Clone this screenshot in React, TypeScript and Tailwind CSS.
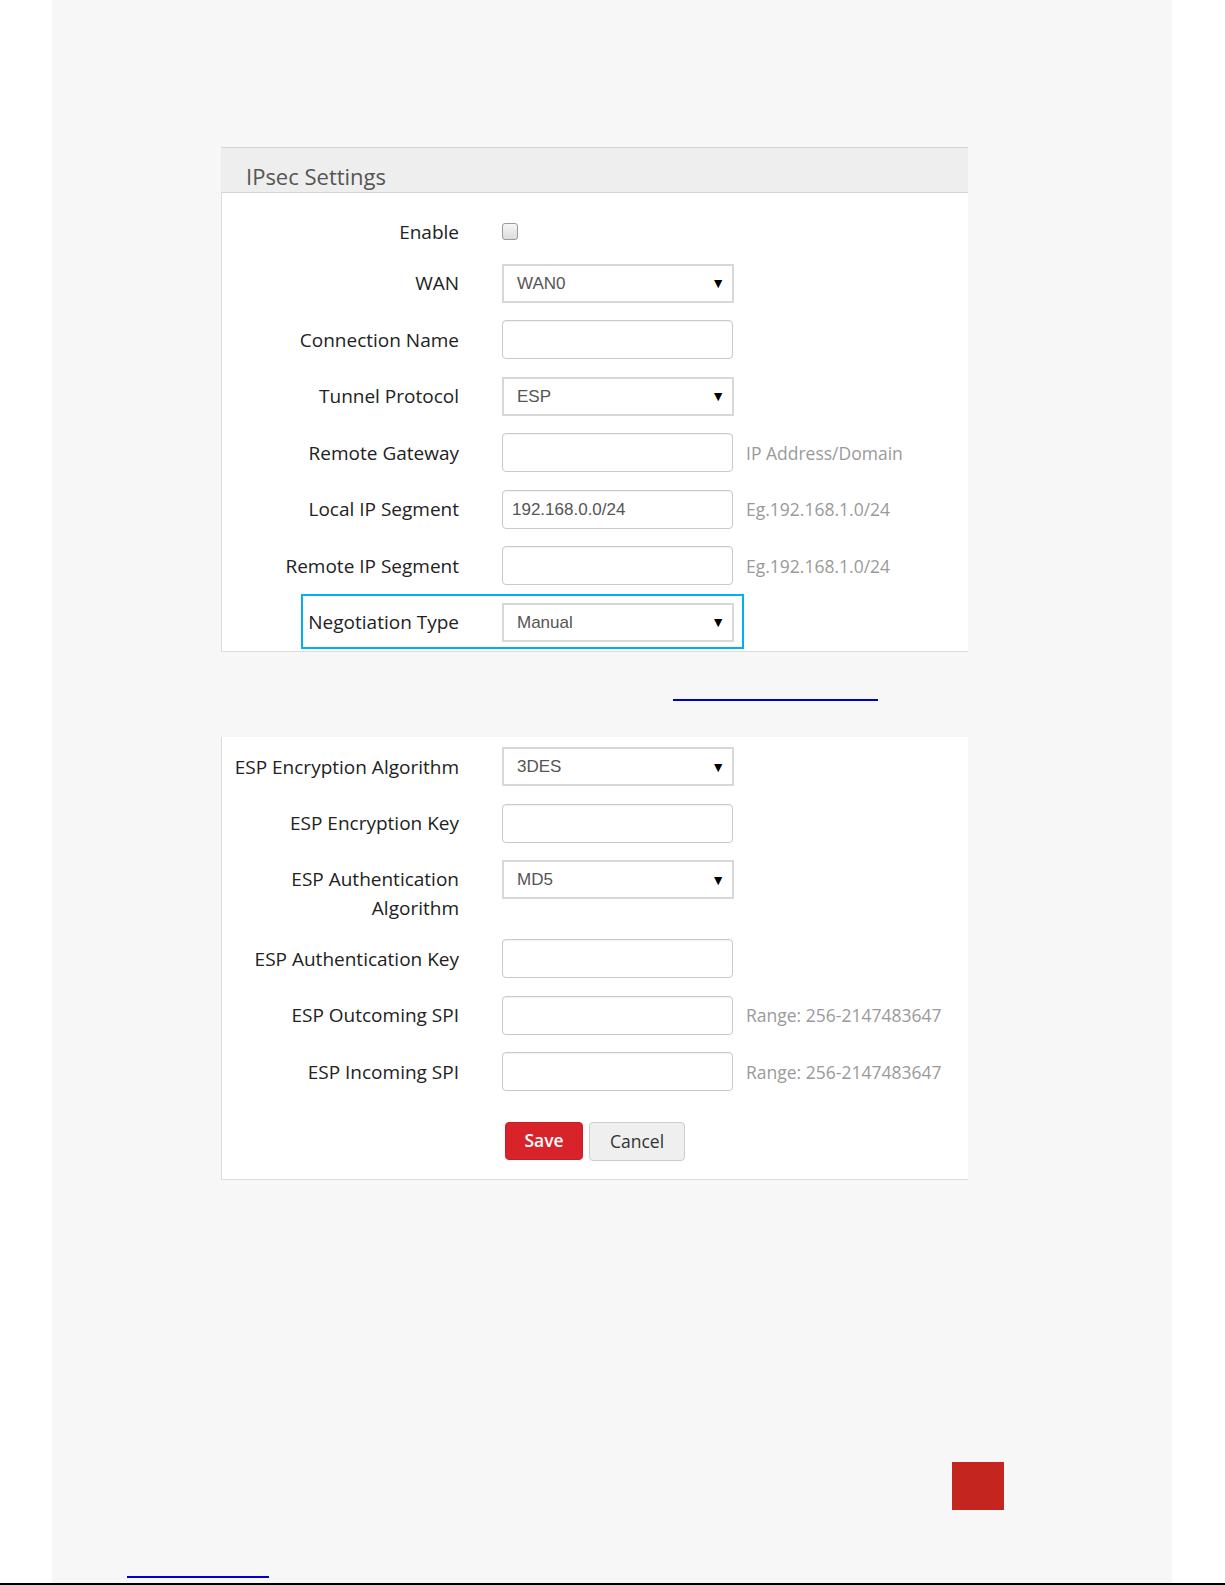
import React from 'react'

const labelFont = { fontFamily: '"Open Sans", "Noto Sans", sans-serif' }

type Field = {
  label: string
  kind: 'select' | 'input'
  value?: string
  hint?: string
}

const Select = ({ value }: { value: string }) => (
  <div className="flex h-[39px] w-[232px] items-center justify-between border-2 border-[#d8d8d8] bg-white pl-[13px] pr-[7px] font-['Liberation_Sans',Arial,sans-serif] text-[17px] text-[#555]">
    <span>{value}</span>
    <span className="text-[14px] leading-none text-black">▼</span>
  </div>
)

const Input = ({ value }: { value?: string }) => (
  <div className="flex h-[39px] w-[231px] items-center rounded-[4px] border border-[#c9c9c9] bg-white px-[9px] font-['Liberation_Sans',Arial,sans-serif] text-[17px] text-[#555] shadow-[inset_0_1px_1px_rgba(0,0,0,0.06)]">
    {value}
  </div>
)

const Row = ({ f }: { f: Field }) => (
  <div className="flex h-[56.5px] items-center">
    <div className="w-[237px] text-right text-[19px] leading-[28px] text-[#222]" style={labelFont}>
      {f.label}
    </div>
    <div className="ml-[43px]">
      {f.kind === 'select' ? <Select value={f.value ?? ''} /> : <Input value={f.value} />}
    </div>
    {f.hint && (
      <span className="ml-[13px] text-[17.5px] text-[#9a9a9a]" style={labelFont}>
        {f.hint}
      </span>
    )}
  </div>
)

const top: Field[] = [
  { label: 'WAN', kind: 'select', value: 'WAN0' },
  { label: 'Connection Name', kind: 'input' },
  { label: 'Tunnel Protocol', kind: 'select', value: 'ESP' },
  { label: 'Remote Gateway', kind: 'input', hint: 'IP Address/Domain' },
  { label: 'Local IP Segment', kind: 'input', value: '192.168.0.0/24', hint: 'Eg.192.168.1.0/24' },
  { label: 'Remote IP Segment', kind: 'input', hint: 'Eg.192.168.1.0/24' },
]

const bottom: Field[] = [
  { label: 'ESP Authentication Key', kind: 'input' },
  { label: 'ESP Outcoming SPI', kind: 'input', hint: 'Range: 256-2147483647' },
  { label: 'ESP Incoming SPI', kind: 'input', hint: 'Range: 256-2147483647' },
]

export default function App() {
  return (
    <div className="flex h-[1585px] w-[1225px] flex-col bg-white">
      <div className="ml-[52px] flex h-[1583px] w-[1120px] flex-col bg-[#f7f7f7]">
        <div className="pl-[169px] pt-[147px]">
          {/* IPsec settings card */}
          <div className="w-[747px] border-b border-l border-[#dcdcdc] bg-white">
            <div className="-ml-px h-[46px] border-b border-t border-[#d4d4d4] bg-[#eeeeee] pl-[25px] pt-[14px] text-[22px] leading-[28px] text-[#555]" style={labelFont}>
              IPsec Settings
            </div>
            <div className="flex h-[62px] items-center pt-[15px]">
              <div className="w-[237px] text-right text-[19px] leading-[28px] text-[#222]" style={labelFont}>
                Enable
              </div>
              <span className="ml-[43px] h-[17px] w-[16px] rounded-[3px] border border-[#9a9a9a] bg-gradient-to-b from-[#f6f6f6] to-[#dcdcdc]" />
            </div>
            {top.map((f) => (
              <Row key={f.label} f={f} />
            ))}
            <div className="relative flex h-[56.5px] items-center">
              <div className="w-[237px] text-right text-[19px] leading-[28px] text-[#222]" style={labelFont}>
                Negotiation Type
              </div>
              <div className="ml-[43px]">
                <Select value="Manual" />
              </div>
              <div className="absolute left-[79px] top-0 h-[55px] w-[443px] border-2 border-[#00b0f0]" />
            </div>
          </div>

          <div className="h-[85px] pl-[452px] pt-[47px]">
            <div className="h-[2px] w-[205px] bg-[#0000cc]" />
          </div>

          {/* manual negotiation card */}
          <div className="w-[747px] border-b border-l border-[#dcdcdc] bg-white pt-[2px]">
            <Row f={{ label: 'ESP Encryption Algorithm', kind: 'select', value: '3DES' }} />
            <Row f={{ label: 'ESP Encryption Key', kind: 'input' }} />
            <div className="flex h-[79px] items-start">
              <div className="w-[237px] pt-[13.75px] text-right text-[19px] leading-[29px] text-[#222]" style={labelFont}>
                ESP Authentication
                <br />
                Algorithm
              </div>
              <div className="ml-[43px] pt-[8.75px]">
                <Select value="MD5" />
              </div>
            </div>
            {bottom.map((f) => (
              <Row key={f.label} f={f} />
            ))}
            <div className="flex gap-[6px] pb-[18px] pl-[283px] pt-[21.5px]" style={labelFont}>
              <button className="h-[38px] w-[78px] rounded-[4px] border border-[#c81d25] bg-[#d9232b] text-[17.5px] font-semibold text-white">
                Save
              </button>
              <button className="h-[39px] w-[96px] rounded-[4px] border border-[#cccccc] bg-[#efefef] text-[17.5px] text-[#333]">
                Cancel
              </button>
            </div>
          </div>
        </div>

        <div className="ml-[900px] mt-[282px] h-[48px] w-[52px] bg-[#c4251f]" />
        <div className="ml-[75px] mt-[66px] h-[2px] w-[142px] bg-[#0000cc]" />
      </div>
      <div className="h-[2px] w-full bg-black" />
    </div>
  )
}
